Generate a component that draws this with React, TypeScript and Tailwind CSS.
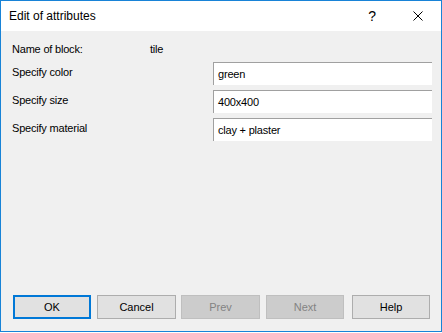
export default function App() {
  const fields = [
    { label: "Specify color", value: "green" },
    { label: "Specify size", value: "400x400" },
    { label: "Specify material", value: "clay + plaster" },
  ];

  return (
    <div className="w-[442px] h-[333px] bg-white font-['Liberation_Sans',Arial,sans-serif] text-black">
      <div className="w-[442px] h-[332px] border border-[#1883d7] bg-[#f0f0f0] flex flex-col">
        {/* Title bar */}
        <div className="h-[30px] bg-white flex items-center">
          <span className="pl-[8px] text-[12px] leading-none">Edit of attributes</span>
          <span className="ml-auto mr-[37px] text-[14px] leading-none">?</span>
          <svg width="10" height="10" viewBox="0 0 10 10" className="mr-[18px]">
            <path d="M0.5 0.5 L9.5 9.5 M9.5 0.5 L0.5 9.5" stroke="#000" strokeWidth="1" />
          </svg>
        </div>

        {/* Content */}
        <div className="flex-1 flex flex-col pl-[11px] pr-[9px] text-[11px] tracking-[-0.2px]">
          <div className="mt-[8px] h-[20px] flex items-center">
            <span className="w-[138px]">Name of block:</span>
            <span>tile</span>
          </div>
          <div className="mt-[3px] flex flex-col gap-[5px]">
            {fields.map((f) => (
              <div key={f.label} className="flex items-center h-[23px]">
                <span className="w-[201px] -mt-[3px]">{f.label}</span>
                <div className="flex-1 h-[23px] bg-white border-t border-l border-[#a0a0a0] flex items-center pl-[4px]">
                  {f.value}
                </div>
              </div>
            ))}
          </div>

          {/* Buttons */}
          <div className="mt-auto mb-[12px] flex items-center h-[24px] -ml-[9px] pl-[10px] text-[11px] tracking-normal">
            <button className="w-[78px] h-[24px] border-2 border-[#0078d7] bg-[#e1e1e1]">OK</button>
            <button className="ml-[6px] w-[79px] h-[24px] border border-[#adadad] bg-[#e1e1e1]">Cancel</button>
            <button className="ml-[5px] w-[79px] h-[24px] border border-[#bfbfbf] bg-[#cccccc] text-[#838383]">Prev</button>
            <button className="ml-[6px] w-[78px] h-[24px] border border-[#bfbfbf] bg-[#cccccc] text-[#838383]">Next</button>
            <button className="ml-[8px] w-[78px] h-[24px] border border-[#adadad] bg-[#e1e1e1]">Help</button>
          </div>
        </div>
      </div>
    </div>
  );
}
